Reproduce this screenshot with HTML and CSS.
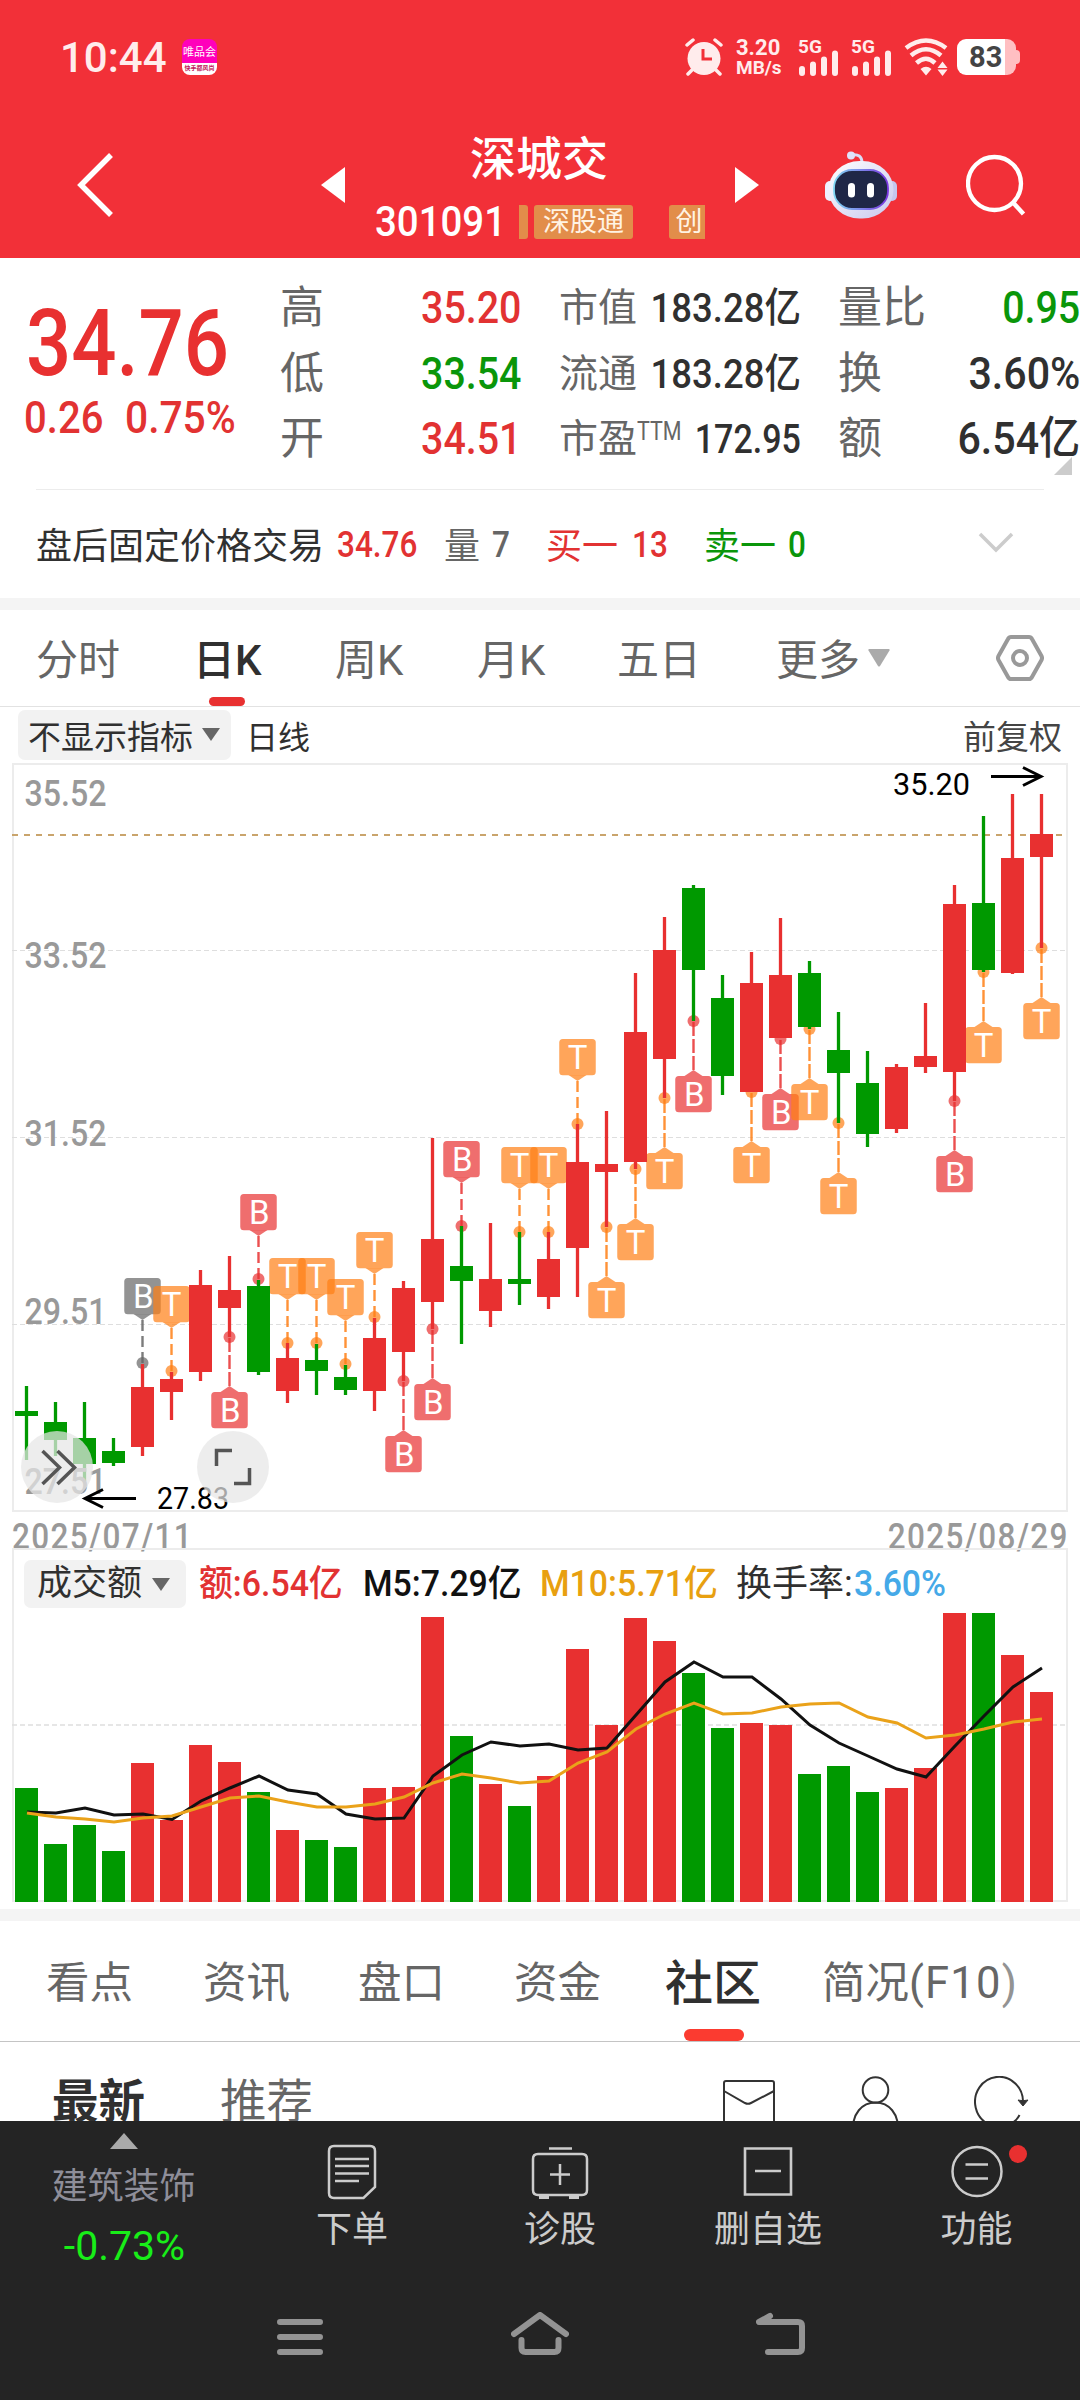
FILE: index.html
```html
<!DOCTYPE html>
<html lang="zh-CN">
<head>
<meta charset="utf-8">
<title>深城交 301091</title>
<link rel="stylesheet" href="styles.css">
</head>
<body>
<div class="screen">
  <header class="header">
    <div class="status">
      <span class="time">10:44</span>
      <div class="app-badge"><b>唯品会</b><i>快手都风尚</i></div>
      <svg class="alarm" width="38" height="38" viewBox="0 0 38 38"><circle cx="19" cy="20.500" r="16.500" fill="#ffecec"/><path d="M2 7L8 2M30 2l6 5M7 32l-4 4M31 32l4 4" stroke="#ffecec" stroke-width="3.500" stroke-linecap="round"/><path d="M18 11v10h9" fill="none" stroke="#f23038" stroke-width="3"/></svg>
      <div class="speed"><b>3.20</b><b>MB/s</b></div>
      <div class="signal"><b>5G</b><svg width="42" height="26" viewBox="0 0 42 26"><path d="M4 19v4M15 14.500V23M26 9.500V23M37 3.500V23" stroke="#ffecec" stroke-width="6" stroke-linecap="round"/></svg></div>
      <div class="signal"><b>5G</b><svg width="42" height="26" viewBox="0 0 42 26"><path d="M4 19v4M15 14.500V23M26 9.500V23M37 3.500V23" stroke="#ffecec" stroke-width="6" stroke-linecap="round"/></svg></div>
      <svg class="wifi" width="46" height="38" viewBox="0 0 46 38"><path d="M2 10Q22-5 42 10M7 17.500Q22 5 37 17.500M12.500 25Q22 16.500 31 25" fill="none" stroke="#ffecec" stroke-width="4.500"/><path d="M16.500 31q5.500-4.500 11 0L22 37.500zM38.500 23.500l5 6.500h-10zM38.500 38l5-6.500h-10z" fill="#ffecec"/></svg>
      <div class="battery"><b>83</b></div>
    </div>
    <div class="nav">
      <svg width="36" height="64" viewBox="0 0 36 64"><path d="M34 2L4 32l30 30" fill="none" stroke="#fff" stroke-width="5.500"/></svg>
      <svg width="24" height="36" viewBox="0 0 24 36"><path d="M24 0v36L0 18z" fill="#fff"/></svg>
      <div class="title">
        <h1>深城交</h1>
        <div class="code-row"><span class="code">301091</span><em class="tag sliver"></em><em class="tag wide">深股通</em><em class="tag cut">创</em></div>
      </div>
      <svg width="24" height="36" viewBox="0 0 24 36"><path d="M0 0v36l24-18z" fill="#fff"/></svg>
      <svg class="robot" width="72" height="68" viewBox="0 0 72 68">
        <defs><linearGradient id="shell" x1="0" y1="0" x2="1" y2="1"><stop offset="0" stop-color="#fff"/><stop offset="1" stop-color="#c9c8ee"/></linearGradient><linearGradient id="rim"><stop offset="0" stop-color="#7fd6f2"/><stop offset="1" stop-color="#7a35e0"/></linearGradient></defs>
        <path d="M26 4q11-2 11 8" fill="none" stroke="#d9dcf6" stroke-width="3"/><circle cx="26" cy="4.500" r="4" fill="#dfe2fa"/>
        <rect x="0" y="30" width="10" height="20" rx="5" fill="#eef0ff"/><rect x="62" y="30" width="10" height="20" rx="5" fill="#c5c6ee"/>
        <rect x="3.500" y="10" width="65" height="57.500" rx="31" fill="url(#shell)"/>
        <rect x="9" y="19" width="54" height="39" rx="18" fill="#1f2747" stroke="url(#rim)" stroke-width="1.800"/>
        <rect x="23" y="32" width="7" height="14.500" rx="3.500" fill="#fff"/><rect x="42" y="32" width="7" height="14.500" rx="3.500" fill="#fff"/></svg>
      <svg width="60" height="62" viewBox="0 0 60 62"><circle cx="28.500" cy="29.500" r="26.500" fill="none" stroke="#fff" stroke-width="4.300"/><path d="M47 48.500L57.500 60" stroke="#fff" stroke-width="4.500"/></svg>
    </div>
  </header>

  <section class="quote">
    <div class="price">
      <div class="last num">34.76</div>
      <div class="change"><span class="num">0.26</span><span class="num">0.75%</span></div>
    </div>
    <div class="stats">
      <span class="k">高</span><span class="v num up">35.20</span><span class="k sm">市值</span><span class="r num mid">183.28亿</span><span class="k last-k">量比</span><span class="r num down">0.95</span>
      <span class="k">低</span><span class="v num down">33.54</span><span class="k sm">流通</span><span class="r num mid">183.28亿</span><span class="k last-k">换</span><span class="r num wide-n">3.60%</span>
      <span class="k">开</span><span class="v num up">34.51</span><span class="k sm">市盈<sup>TTM</sup></span><span class="r num mid pe">172.95</span><span class="k last-k">额</span><span class="r num wide-n">6.54亿</span>
    </div>
    <svg class="corner" width="18" height="18" viewBox="0 0 18 18"><path d="M18 0v18H0z" fill="#ccc"/></svg>
  </section>

  <section class="after">
    <span>盘后固定价格交易</span><span class="num up">34.76</span><span class="gray">量</span><span class="num gray">7</span><span class="up">买一</span><span class="num up">13</span><span class="down">卖一</span><span class="num down">0</span>
    <svg width="36" height="22" viewBox="0 0 36 22"><path d="M2 2l16 16L34 2" fill="none" stroke="#ccc" stroke-width="3.500"/></svg>
  </section>

  <nav class="periods">
    <span>分时</span><span class="on">日K</span><span>周K</span><span>月K</span><span>五日</span><span>更多</span>
    <svg width="22" height="18" viewBox="0 0 22 18"><path d="M1 0h20q1 0 .500 1.500L12 17q-1 1-2 0L.500 1.500Q0 0 1 0z" fill="#aaa"/></svg>
    <svg width="48" height="46" viewBox="0 0 48 46"><path d="M15 2h18q2 0 3 2l9.500 17q1 2 0 4L36 42q-1 2-3 2H15q-2 0-3-2L2.500 25q-1-2 0-4L12 4q1-2 3-2z" fill="none" stroke="#999" stroke-width="4"/><circle cx="24" cy="23" r="7" fill="none" stroke="#999" stroke-width="4"/></svg>
  </nav>

  <div class="indicator">
    <button class="pick">不显示指标<svg width="18" height="13" viewBox="0 0 18 13"><path d="M0 0h18L9 13z" fill="#666"/></svg></button>
    <span class="line">日线</span>
    <span class="adjust">前复权</span>
  </div>

  <svg id="kline" class="kline" width="1080" height="752" viewBox="0 762 1080 752"></svg>
  <div class="dates"><span class="num">2025/07/11</span><span class="num">2025/08/29</span></div>

  <div class="volume">
    <svg id="volume" width="1080" height="360" viewBox="0 1548 1080 360"></svg>
    <div class="legend">
      <button class="pick">成交额<svg width="18" height="13" viewBox="0 0 18 13"><path d="M0 0h18L9 13z" fill="#666"/></svg></button>
      <span class="num up">额:6.54亿</span><span class="num black">M5:7.29亿</span><span class="num gold">M10:5.71亿</span><span>换手率:</span><span class="num blue">3.60%</span>
    </div>
  </div>

  <nav class="sections">
    <span>看点</span><span>资讯</span><span>盘口</span><span>资金</span><span class="on">社区</span><span>简况<em>(F10<i>)</i></em></span>
  </nav>

  <div class="feed">
    <b>最新</b><span>推荐</span>
    <svg width="54" height="54" viewBox="0 0 54 54"><rect x="2" y="5" width="50" height="46" rx="2" fill="none" stroke="#333" stroke-width="2"/><path d="M2 15l21 12q3 1.500 6 0L52 15" fill="none" stroke="#333" stroke-width="2"/></svg>
    <svg width="48" height="54" viewBox="0 0 48 54"><circle cx="23.500" cy="14" r="12.800" fill="none" stroke="#333" stroke-width="2"/><path d="M1.200 54C0 38 10 26.500 23.500 26.500S47 38 45.800 54" fill="none" stroke="#333" stroke-width="2"/></svg>
    <svg width="56" height="54" viewBox="0 0 56 54"><path d="M49 27A24 25 0 1 0 34 49Q42 46 45.500 39" fill="none" stroke="#333" stroke-width="2"/><path d="M44 24q5 1.500 10 0l-5 6z" fill="#333" stroke="#333"/></svg>
  </div>

  <footer class="dock">
    <div class="actions">
      <div class="sector"><svg width="28" height="16" viewBox="0 0 28 16"><path d="M14 0l14 16H0z" fill="#aaa"/></svg><span>建筑装饰</span><strong>-0.73%</strong></div>
      <div class="act"><svg width="50" height="56" viewBox="0 0 50 56"><path d="M7 2h36q5 0 5 5v36L36.500 54H7q-5 0-5-5V7q0-5 5-5zM8 15h34M8 22h34M8 29.500h34M8 37h24" fill="none" stroke="#ccc" stroke-width="2.500"/></svg><span>下单</span></div>
      <div class="act"><svg width="58" height="56" viewBox="0 0 58 56"><path d="M18 4.500h23M7 10h44q5 0 5 5v31q0 5-5 5H7q-5 0-5-5V15q0-5 5-5zM19 30.500h20M29 20v21" fill="none" stroke="#ccc" stroke-width="2.500"/><path d="M8 53h10M38 53h10" stroke="#ccc" stroke-width="4"/></svg><span>诊股</span></div>
      <div class="act"><svg width="50" height="56" viewBox="0 0 50 56"><path d="M2 4.500h46v46H2zM12 27h26" fill="none" stroke="#ccc" stroke-width="2.600"/></svg><span>删自选</span></div>
      <div class="act"><svg width="52" height="56" viewBox="0 0 52 56"><circle cx="26" cy="27.500" r="24.500" fill="none" stroke="#ccc" stroke-width="2.500"/><path d="M14.500 20.500H37M14.500 34.500H37" stroke="#ccc" stroke-width="2.500"/></svg><span>功能</span><i class="dot"></i></div>
    </div>
    <div class="keys">
      <svg width="46" height="44" viewBox="0 0 46 44"><path d="M3 10h40M3 25h40M3 40h40" stroke="#939393" stroke-width="6" stroke-linecap="round"/></svg>
      <svg width="58" height="44" viewBox="0 0 58 44"><path d="M3 22L29 3l26 19M10.500 28v8q0 4 4 4h29q4 0 4-4v-8" fill="none" stroke="#939393" stroke-width="6" stroke-linecap="round" stroke-linejoin="round"/></svg>
      <svg width="50" height="44" viewBox="0 0 50 44"><path d="M14 4L3 10h39q4 0 4 4v22q0 4-4 4H12" fill="none" stroke="#939393" stroke-width="6" stroke-linecap="round" stroke-linejoin="round"/></svg>
    </div>
  </footer>
</div>
<script src="charts.js"></script>
</body>
</html>
```
FILE: styles.css
```css
* { box-sizing: border-box; }
body { margin: 0; background: #fff; color: #303030; font-family: Roboto, "Noto Sans CJK SC", sans-serif; }
h1, b, i, em, strong { font-style: normal; }
svg { display: block; flex: none; }
.screen { width: 1080px; height: 2400px; overflow: hidden; display: flex; flex-direction: column; background: #fff; }
.screen > * { flex: none; }
.num { display: inline-block; white-space: nowrap; font-weight: 500; transform: scaleX(.875); transform-origin: 0 50%; }
.up { color: #e23232; }
.down { color: #0a960a; }
.gray { color: #666; }
.black { color: #111; }
.gold { color: #e8a010; }
.blue { color: #45a9e8; }

/* header */
.header { height: 258px; background: #f23038; color: #fff; }
.status { height: 115px; display: grid; grid-template-columns: 122px 503px 51px 62px 53px 53px 53px 64px; padding-left: 60px; padding-top: 38px; align-items: start; color: #ffecec; }
.time { font-size: 42px; line-height: 39px; font-weight: 500; }
.app-badge { width: 35px; height: 36px; margin-top: 1px; border-radius: 8px; overflow: hidden; background: linear-gradient(#f0b 66%, #fff 68%); text-align: center; }
.app-badge b { display: block; font-size: 11px; line-height: 27px; font-weight: 400; color: #fff; height: 24px; }
.app-badge i { display: block; font-size: 6px; line-height: 10px; color: #c2185b; font-weight: 700; white-space: nowrap; }
.speed b { display: block; font-size: 22px; line-height: 19px; font-weight: 700; }
.speed b + b { font-size: 19px; line-height: 21px; }
.signal { height: 38px; position: relative; }
.signal b { position: absolute; left: 0; top: 0; font-size: 19px; line-height: 18px; }
.signal svg { margin-top: 12px; }
.battery { width: 59px; height: 36px; margin-top: 1px; border-radius: 9px; background: linear-gradient(90deg, #fff 82%, #ffbfc2 82%); color: #444; font-size: 29px; line-height: 37px; padding-left: 12px; position: relative; }
.battery::after { content: ""; position: absolute; right: -4px; top: 11px; width: 4px; height: 14px; border-radius: 0 4px 4px 0; background: #ffbfc2; }
.nav { height: 143px; display: grid; grid-template-columns: 244px 54px 360px 90px 141px 60px; padding-left: 77px; align-items: center; }
.nav > svg { margin-top: -4px; }
.title { width: 330px; align-self: start; padding-top: 16px; }
.title h1 { margin: 0 2px 0 0; font-size: 46px; line-height: 56px; font-weight: 500; text-align: center; }
.code-row { display: flex; align-items: center; height: 36px; margin-top: 17px; overflow: hidden; }
.code { width: 144px; font-size: 42px; line-height: 36px; font-weight: 500; transform: scaleX(.915); transform-origin: 0 50%; }
.tag { flex: none; height: 34px; background: #e28d4a; border-radius: 3px; font-size: 27px; line-height: 34px; text-align: center; color: #fff3e4; }
.sliver { width: 9px; margin-right: 6px; border-radius: 0 3px 3px 0; }
.wide { width: 99px; margin-right: 36px; }
.cut { width: 36px; padding-left: 4px; border-radius: 3px 0 0 3px; }

/* quote */
.quote { position: relative; height: 230px; display: flex; }
.price { width: 280px; padding: 51px 0 0 26px; color: #e83030; }
.last { font-size: 92px; line-height: 70px; transform: scaleX(.865); }
.change { display: grid; grid-template-columns: 101px 1fr; font-size: 45px; line-height: 50px; margin: 14px 0 0 -2px; color: #e23232; }
.change .num { transform: scaleX(.89); }
.change .num + .num { transform: scaleX(.905); }
.stats { width: 800px; padding-top: 17px; display: grid; grid-template-columns: 141px 138px 80px 162px 79px 200px; grid-auto-rows: 65.500px; font-size: 45px; line-height: 66px; }
.stats .k { font-size: 44px; color: #666; white-space: nowrap; }
.stats .last-k { padding-left: 37px; }
.stats .sm { font-size: 39px; }
.stats sup { font-size: 25px; font-weight: 400; line-height: 0; vertical-align: 12px; display: inline-block; transform: scaleX(.86); transform-origin: 0 50%; }
.stats .r { justify-self: end; transform-origin: 100% 50%; }
.stats .mid { font-size: 41px; transform: scaleX(.89); }
.stats .pe { transform: scaleX(.83); }
.stats .wide-n { transform: scaleX(.915); }
.corner { position: absolute; left: 1054px; top: 199px; }

/* after-hours */
.after { height: 122px; border-bottom: 12px solid #f4f4f4; padding: 0 0 0 36px; display: grid; grid-template-columns: 301px 107px 48px 54px 86px 72px 84px 190px 36px; align-items: center; font-size: 36px; background: linear-gradient(#ececec, #ececec) 36px 1px / 1008px 1px no-repeat; }
.after .num { padding-top: 4px; }

/* period tabs */
.periods { height: 97px; border-bottom: 1px solid #e2e2e2; padding-left: 36px; display: grid; grid-template-columns: 157px 142px 142px 140px 159px 92px 128px 48px; align-items: center; font-size: 42px; color: #666; }
.periods span { position: relative; height: 96px; line-height: 101px; }
.periods .on { color: #303030; font-weight: 500; }
.periods .on::after { content: ""; position: absolute; left: 16px; bottom: 0; width: 36px; height: 9px; border-radius: 5px; background: #e83030; }
.indicator { height: 55px; display: flex; align-items: center; padding: 0 18px 0 18px; font-size: 33px; }
.pick { border: 0; margin: 0; font: inherit; color: #303030; background: #f2f2f2; border-radius: 7px; display: flex; align-items: center; white-space: nowrap; }
.indicator .pick { width: 213px; height: 50px; padding: 0 0 0 10px; gap: 9px; }
.line { margin-left: 15px; flex: 1; font-size: 32px; }
.adjust { color: #444; }

/* charts */
.dates { height: 34px; display: flex; justify-content: space-between; padding: 0 12px; font-size: 36px; line-height: 46px; color: #999; }
.dates .num { transform: scaleX(.875); letter-spacing: 1.500px; }
.dates .num + .num { transform-origin: 100% 50%; margin-right: -1px; }
.volume { height: 361px; position: relative; }
.legend { position: absolute; left: 24px; top: 12px; height: 48px; display: grid; grid-template-columns: 175px 164px 177px 196px 118px 100px; align-items: center; font-size: 36px; line-height: 46px; white-space: nowrap; }
.legend .num { transform: scaleX(.94); }
.legend .pick { width: 162px; height: 48px; padding: 0 0 0 13px; gap: 10px; font-size: 35px; }

/* section tabs */
.sections { height: 133px; border-top: 12px solid #f4f4f4; border-bottom: 1px solid #c4c4c4; padding-left: 46px; display: grid; grid-template-columns: 157px 155px 156px 151px 157px 1fr; align-items: center; font-size: 43.500px; color: #666; }
.sections span { position: relative; height: 120px; line-height: 126px; }
.sections em { letter-spacing: 1.200px; }
.sections i { opacity: .7; }
.sections .on { font-size: 48px; font-weight: 500; color: #303030; }
.sections .on::after { content: ""; position: absolute; left: 19px; bottom: 0; width: 60px; height: 12px; border-radius: 6px; background: #fb3b30; }
.feed { height: 79px; overflow: hidden; padding: 32px 0 0 52px; display: grid; grid-template-columns: 168px 502px 130px 122px 56px; align-items: start; font-size: 46.500px; line-height: 56px; color: #666; }
.feed svg { margin-top: 2px; }
.feed b { color: #303030; }

/* dock */
.dock { height: 279px; background: #242424; color: #ccc; }
.actions { height: 165px; display: grid; grid-template-columns: 247px 210px 206px 210px 207px; font-size: 36px; line-height: 44px; }
.sector { display: flex; flex-direction: column; align-items: center; padding: 12px 0 0 0; color: #8e8e99; }
.sector span { margin-top: 16px; }
.sector strong { margin: 15px 0 0 2px; font-size: 41px; font-weight: 400; color: #18ee18; }
.act { position: relative; display: flex; flex-direction: column; align-items: center; padding-top: 23px; }
.act span { margin-top: 8px; }
.dot { position: absolute; left: 136px; top: 24px; width: 18px; height: 18px; border-radius: 50%; background: #e83030; }
.keys { height: 114px; padding: 26px 0 0 277px; display: grid; grid-template-columns: 234px 245px 50px; }
```
FILE: charts.js
```js
const RED = '#e83030', GREEN = '#009900';
const FONT = 'Roboto, "Noto Sans CJK SC", sans-serif';
const xAt = i => 26.5 + 29 * i;

// colour, high, body top, body bottom, low, volume top
const days = [
  ['G',1386,1411,1416,1460,1788],['G',1402,1422,1440,1456,1844],['G',1402,1438,1464,1481,1825],['G',1438,1451,1463,1466,1851],
  ['R',1364,1387,1447,1456,1763],['R',1372,1379,1392,1420,1820],['R',1270,1285,1372,1381,1745],['R',1256,1290,1308,1337,1762],
  ['G',1280,1286,1372,1375,1792],['R',1343,1358,1391,1403,1830],['G',1344,1360,1371,1395,1840],['G',1365,1377,1390,1395,1847],
  ['R',1318,1338,1391,1411,1788],['R',1281,1288,1352,1381,1787],['R',1138,1239,1302,1329,1617],['G',1226,1266,1281,1344,1736],
  ['R',1223,1279,1311,1327,1784],['G',1232,1279,1284,1305,1806],['R',1232,1259,1297,1309,1776],['R',1124,1162,1248,1297,1649],
  ['R',1111,1164,1172,1227,1725],['R',973,1032,1162,1169,1618],['R',917,950,1059,1098,1641],['G',885,888,970,1021,1673],
  ['G',975,998,1076,1095,1728],['R',952,983,1092,1092,1723],['R',918,975,1038,1038,1725],['G',961,973,1027,1029,1774],
  ['G',1012,1050,1073,1123,1766],['G',1051,1083,1134,1147,1792],['R',1064,1067,1129,1133,1788],['R',1003,1056,1067,1073,1768],
  ['R',885,904,1072,1101,1613],['G',816,903,970,972,1613],['R',794,858,973,974,1655],['R',794,834,857,948,1692]
];

// day index, letter, side (-1 above, 1 below), anchor y, colour
const O = '#ff7f14', B = '#e83030';
const marks = [
  [4,'B',-1,1363,'#656565'],[5,'T',-1,1371,O],[7,'B',1,1337,B],[8,'B',-1,1279,B],[9,'T',-1,1343,O],[10,'T',-1,1343,O],
  [11,'T',-1,1364,O],[12,'T',-1,1317,O],[13,'B',1,1381,B],[14,'B',1,1329,B],[15,'B',-1,1226,B],[17,'T',-1,1232,O],
  [18,'T',-1,1232,O],[19,'T',-1,1124,O],[20,'T',1,1227,O],[21,'T',1,1169,O],[22,'T',1,1098,O],[23,'B',1,1021,B],
  [25,'T',1,1092,O],[26,'B',1,1039,B],[27,'T',1,1029,O],[28,'T',1,1123,O],[32,'B',1,1101,B],[33,'T',1,972,O],[35,'T',1,948,O]
];

const m5 = [1812,1813,1808,1815,1814,1819.5,1801,1788,1776,1790,1794,1814,1819,1818,1776,1755,1742,1746,1744,1750,1748,1715,1682,1662,1677,1677,1699,1725,1743,1756,1769,1777,1746,1716,1687,1668];
const m10 = [1813,1817,1819,1822,1818,1816,1807,1798,1796,1802,1807,1807,1804,1797,1783,1774,1778,1783,1781,1763,1752,1729,1714,1703,1714,1713,1707,1704,1703,1717,1723,1738,1735,1729,1722,1719];

const label = (x, y, w, s, text, fill, weight) =>
  `<text x="${x}" y="${y}" font-size="${s}" font-weight="${weight}" fill="${fill}" textLength="${w}" lengthAdjust="spacingAndGlyphs">${text}</text>`;
const grid = (y, h = 1) => `<path d="M12 ${y}H1068" stroke="#dedede" stroke-width="${h}" stroke-dasharray="5 3"/>`;

let k = `<g font-family='${FONT}'>`;
k += '<rect x="13" y="764" width="1054" height="747" fill="none" stroke="#ececec" stroke-width="2"/>';
k += grid(950.5) + grid(1137.5) + grid(1324.5);
k += '<path d="M12 835H1064" stroke="#c9a46c" stroke-width="2" stroke-dasharray="6 6"/>';
marks.forEach(([i, ch, side, y, c]) => {
  const x = xAt(i), top = side < 0 ? y - 85 : y + 55;
  const edge = side < 0 ? top + 36 : top, tip = edge - side * 6;
  k += `<path d="M${x} ${tip}V${y}" stroke="${c}" stroke-opacity=".85" stroke-width="2.400" stroke-dasharray="${side < 0 ? '11 5' : '14 3'}"/>`;
  k += `<g fill="${c}" fill-opacity=".7"><circle cx="${x}" cy="${y}" r="6"/><rect x="${x - 18.25}" y="${top}" width="36.500" height="36.300" rx="3.500"/><path d="M${x - 9} ${edge}L${x} ${tip}L${x + 9} ${edge}z"/></g>`;
  k += `<text x="${x + (ch === 'B' ? .7 : 0)}" y="${top + 30}" font-size="33" fill="#fff" text-anchor="middle">${ch}</text>`;
});
days.forEach(([c, hi, t, b, lo], i) => {
  const f = c === 'R' ? RED : GREEN, x = xAt(i);
  k += `<path d="M${x} ${hi}V${lo}" stroke="${f}" stroke-width="3.300"/><rect x="${x - 11.5}" y="${t}" width="23" height="${b - t}" fill="${f}"/>`;
});
[['35.52', 806], ['33.52', 968], ['31.52', 1146], ['29.51', 1324], ['27.51', 1494]].forEach(([t, y]) => {
  k += label(24.5, y, 82, 36, t, '#999', 500);
});
k += label(893, 795, 77, 31, '35.20', '#000', 400) + label(157, 1509, 72, 31, '27.83', '#000', 400);
k += '<g fill="none" stroke="#000" stroke-width="3"><path d="M991 776.500h50M1023 767.500l18 9-18 9"/><path d="M136 1498.500H85M103 1489.500l-18 9 18 9"/></g>';
k += '<g fill="#e6e6e6" fill-opacity=".72"><circle cx="57" cy="1467" r="36"/><circle cx="233" cy="1467" r="36"/></g>';
k += '<g fill="none" stroke="#555" stroke-width="3.500"><path d="M42.500 1451l17 16.500-17 16.500M57.500 1451l17 16.500-17 16.500"/><path d="M216.500 1466v-15.500H232M234 1483.500h15.500V1468"/></g></g>';
document.getElementById('kline').innerHTML = k;

let v = '<rect x="13" y="1549" width="1054" height="352" fill="none" stroke="#ececec" stroke-width="2"/>' + grid(1725, 1.5);
days.forEach((d, i) => {
  v += `<rect x="${xAt(i) - 11.5}" y="${d[5]}" width="23" height="${1902 - d[5]}" fill="${d[0] === 'R' ? RED : GREEN}"/>`;
});
const line = (ys, c) => `<polyline points="${ys.map((y, i) => xAt(i) + .5 + ',' + y).join(' ')}" fill="none" stroke="${c}" stroke-width="3"/>`;
v += line(m5, '#111') + line(m10, '#eaa21a');
document.getElementById('volume').innerHTML = v;
```
